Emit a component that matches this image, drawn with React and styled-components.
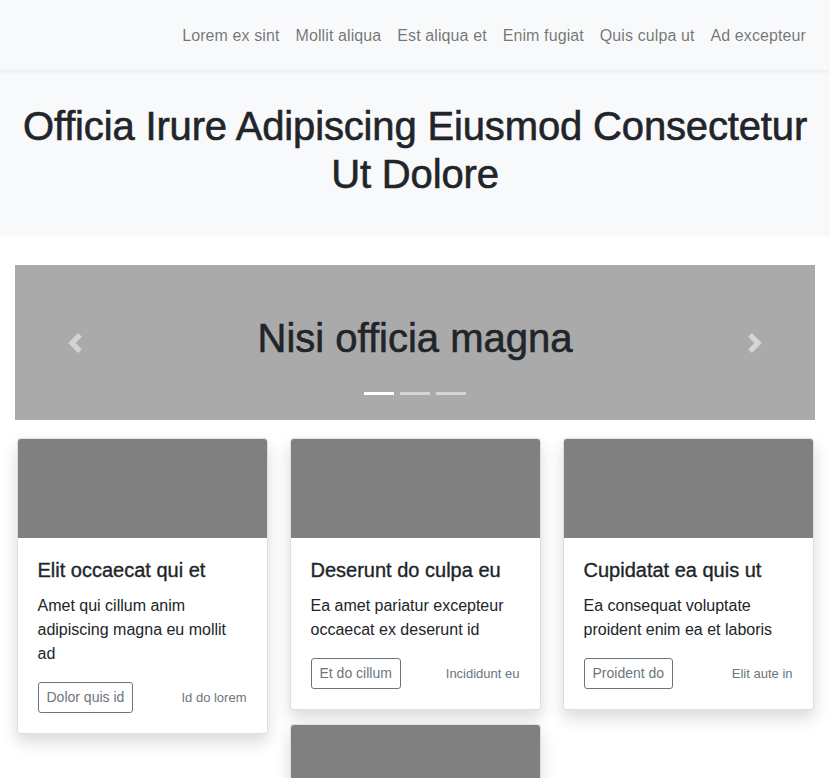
import React from "react";
import styled, { createGlobalStyle } from "styled-components";

const Global = createGlobalStyle`
  * { box-sizing: border-box; }
  body {
    margin: 0;
    font-family: "Liberation Sans", Arial, sans-serif;
    color: #212529;
    background: #fff;
    font-size: 16px;
    line-height: 1.5;
  }
`;

const Navbar = styled.nav`
  height: 70px;
  background: #f8f9fa;
  display: flex;
  align-items: center;
  justify-content: flex-end;
  padding: 2px 16px 0;
  box-shadow: 0 2px 4px rgba(0, 0, 0, 0.06);
  position: relative;
  z-index: 2;
`;

const NavLink = styled.a`
  padding: 8px;
  color: rgba(0, 0, 0, 0.55);
  text-decoration: none;
  font-size: 16px;
  letter-spacing: 0.1px;
`;

const Hero = styled.header`
  background: #f8f9fa;
  padding: 32px 16px 35px;
  box-shadow: 0 2px 4px rgba(0, 0, 0, 0.05);
`;

const HeroTitle = styled.h1`
  margin: 0;
  text-align: center;
  font-size: 40px;
  font-weight: 400;
  line-height: 1.2;
  letter-spacing: -0.15px;
  -webkit-text-stroke: 0.6px #212529;
`;

const Main = styled.main`
  padding: 32px 15px 0;
`;

const Carousel = styled.div`
  position: relative;
  height: 155px;
  background: #aaaaaa;
  display: flex;
  align-items: center;
  justify-content: center;
`;

const SlideTitle = styled.h2`
  margin: 0 0 10px;
  font-size: 40px;
  font-weight: 400;
  line-height: 1.2;
  -webkit-text-stroke: 0.6px #212529;
`;

const Control = styled.button`
  position: absolute;
  top: 0;
  bottom: 0;
  ${(p) => (p.$side === "prev" ? "left: 0;" : "right: 0;")}
  width: 15%;
  border: 0;
  background: none;
  display: flex;
  align-items: center;
  justify-content: center;
  opacity: 0.5;
  padding: 0;
`;

const Indicators = styled.div`
  position: absolute;
  left: 0;
  right: 0;
  bottom: 25px;
  display: flex;
  justify-content: center;
  gap: 6px;
`;

const Indicator = styled.span`
  width: 30px;
  height: 3px;
  background: #fff;
  opacity: ${(p) => (p.$active ? 1 : 0.5)};
`;

const Grid = styled.div`
  margin-top: 18px;
  display: grid;
  grid-template-columns: repeat(3, 251px);
  justify-content: center;
  column-gap: 22px;
  align-items: start;
`;

const Column = styled.div`
  display: flex;
  flex-direction: column;
  gap: 14px;
`;

const Card = styled.div`
  background: #fff;
  border: 1px solid rgba(0, 0, 0, 0.125);
  border-radius: 4px;
  overflow: hidden;
  box-shadow: 0 8px 16px rgba(0, 0, 0, 0.15);
`;

const CardImage = styled.div`
  height: 99px;
  background: #808080;
`;

const CardBody = styled.div`
  padding: 20px;
`;

const CardTitle = styled.h5`
  margin: 0 0 12px;
  font-size: 20px;
  font-weight: 400;
  line-height: 1.2;
  -webkit-text-stroke: 0.35px #212529;
`;

const CardText = styled.p`
  margin: 0 0 16px;
`;

const CardFooter = styled.div`
  display: flex;
  align-items: center;
  justify-content: space-between;
`;

const OutlineButton = styled.button`
  font-family: inherit;
  font-size: 14px;
  line-height: 21px;
  height: 31px;
  padding: 4px 8px;
  color: #6c757d;
  background: transparent;
  border: 1px solid #6c757d;
  border-radius: 3px;
`;

const Muted = styled.small`
  font-size: 13px;
  color: #6c757d;
`;

const Chevron = ({ flip }) => (
  <svg width="20" height="20" viewBox="0 0 8 8" fill="#fff" style={flip ? { transform: "scaleX(-1)" } : undefined}>
    <path d="M5.25 0l-4 4 4 4 1.5-1.5L4.25 4l2.5-2.5L5.25 0z" />
  </svg>
);

const links = ["Lorem ex sint", "Mollit aliqua", "Est aliqua et", "Enim fugiat", "Quis culpa ut", "Ad excepteur"];

const cards = [
  [
    { title: "Elit occaecat qui et", text: "Amet qui cillum anim adipiscing magna eu mollit ad", btn: "Dolor quis id", note: "Id do lorem" },
  ],
  [
    { title: "Deserunt do culpa eu", text: "Ea amet pariatur excepteur occaecat ex deserunt id", btn: "Et do cillum", note: "Incididunt eu" },
    { title: "Sunt irure in", text: "Lorem ipsum dolor sit amet", btn: "Ex ea", note: "Ad sint" },
  ],
  [
    { title: "Cupidatat ea quis ut", text: "Ea consequat voluptate proident enim ea et laboris", btn: "Proident do", note: "Elit aute in" },
  ],
];

export default function App() {
  return (
    <>
      <Global />
      <Navbar>
        {links.map((l) => (
          <NavLink key={l} href="#">{l}</NavLink>
        ))}
      </Navbar>
      <Hero>
        <HeroTitle>Officia Irure Adipiscing Eiusmod Consectetur Ut Dolore</HeroTitle>
      </Hero>
      <Main>
        <Carousel>
          <SlideTitle>Nisi officia magna</SlideTitle>
          <Control $side="prev" aria-label="Previous"><Chevron /></Control>
          <Control $side="next" aria-label="Next"><Chevron flip /></Control>
          <Indicators>
            <Indicator $active />
            <Indicator />
            <Indicator />
          </Indicators>
        </Carousel>
        <Grid>
          {cards.map((col, i) => (
            <Column key={i}>
              {col.map((c) => (
                <Card key={c.title}>
                  <CardImage />
                  <CardBody>
                    <CardTitle>{c.title}</CardTitle>
                    <CardText>{c.text}</CardText>
                    <CardFooter>
                      <OutlineButton>{c.btn}</OutlineButton>
                      <Muted>{c.note}</Muted>
                    </CardFooter>
                  </CardBody>
                </Card>
              ))}
            </Column>
          ))}
        </Grid>
      </Main>
    </>
  );
}
